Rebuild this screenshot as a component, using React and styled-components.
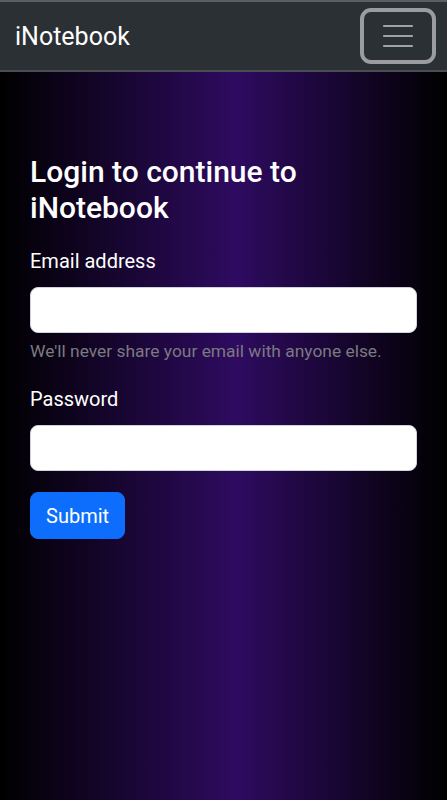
import styled, { createGlobalStyle } from "styled-components";

const GlobalStyle = createGlobalStyle`
  html, body {
    margin: 0;
    padding: 0;
  }
  body {
    font-family: Roboto, "Liberation Sans", sans-serif;
    background: #000;
  }
  * {
    box-sizing: border-box;
  }
`;

export default function App() {
  return (
    <>
      <GlobalStyle />
      <Page>
        <Navbar>
          <Brand>iNotebook</Brand>
          <Toggler aria-label="Toggle navigation">
            <svg width="32" height="32" viewBox="0 0 32 32">
              <path
                d="M2 6h28M2 16h28M2 26h28"
                stroke="rgba(255,255,255,0.55)"
                strokeWidth="2.2"
                strokeLinecap="round"
              />
            </svg>
          </Toggler>
        </Navbar>
        <Main>
          <Heading>Login to continue to iNotebook</Heading>
          <Form onSubmit={(e) => e.preventDefault()}>
            <Field>
              <Label htmlFor="email">Email address</Label>
              <Input id="email" type="email" />
              <Help>We'll never share your email with anyone else.</Help>
            </Field>
            <Field>
              <Label htmlFor="password">Password</Label>
              <Input id="password" type="password" />
            </Field>
            <Button type="submit">Submit</Button>
          </Form>
        </Main>
      </Page>
    </>
  );
}

const Page = styled.div`
  min-height: 800px;
  background: linear-gradient(to right, #000 0%, #2e0b60 53%, #000 100%);
  display: flex;
  flex-direction: column;
`;

const Navbar = styled.nav`
  height: 72px;
  background: #2b3035;
  border-top: 2px solid #5a5e63;
  border-bottom: 2px solid #4a4e53;
  display: flex;
  align-items: center;
  justify-content: space-between;
  padding: 0 11px 0 15px;
`;

const Brand = styled.a`
  color: #fff;
  font-size: 25px;
  line-height: 1;
  text-decoration: none;
`;

const Toggler = styled.button`
  width: 76px;
  height: 56px;
  background: transparent;
  border: 4px solid #9a9c9f;
  border-radius: 11px;
  display: flex;
  align-items: center;
  justify-content: center;
  padding: 0;
`;

const Main = styled.main`
  padding: 82px 30px 0 30px;
`;

const Heading = styled.h2`
  margin: 0 0 21px 0;
  color: #fff;
  font-size: 30px;
  font-weight: 500;
  line-height: 36px;
  padding-right: 90px;
`;

const Form = styled.form`
  display: flex;
  flex-direction: column;
  align-items: flex-start;
`;

const Field = styled.div`
  width: 100%;
  margin-bottom: 21px;
`;

const Label = styled.label`
  display: block;
  color: #fff;
  font-size: 20px;
  line-height: 28px;
  margin-bottom: 12px;
`;

const Input = styled.input`
  display: block;
  width: 100%;
  height: 46px;
  border: 1px solid #ced4da;
  border-radius: 8px;
  background: #fff;
  font-size: 19px;
  padding: 6px 14px;
  outline: none;
`;

const Help = styled.div`
  margin-top: 5px;
  color: #7a7a80;
  font-size: 17.4px;
  line-height: 26px;
`;

const Button = styled.button`
  height: 47px;
  padding: 0 15px;
  background: #0d6efd;
  border: 1px solid #0d6efd;
  border-radius: 8px;
  color: #fff;
  font-family: Roboto, "Liberation Sans", sans-serif;
  font-size: 20px;
`;
